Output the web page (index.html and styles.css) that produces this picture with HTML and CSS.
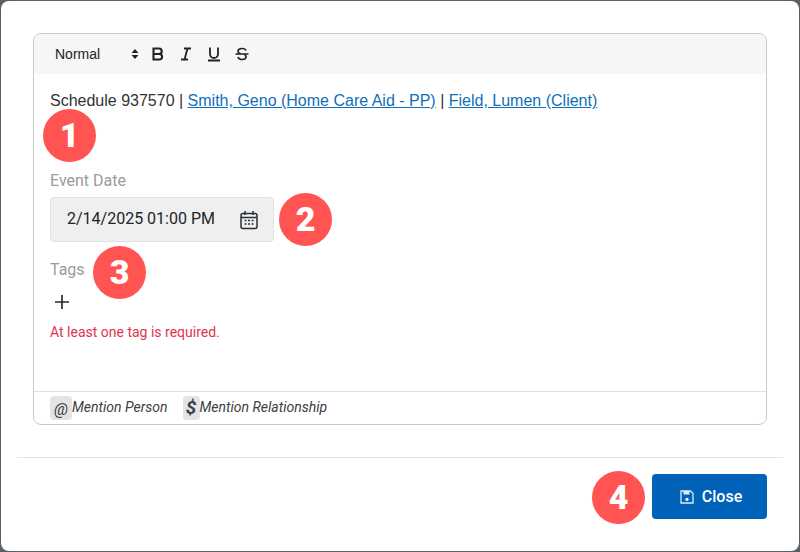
FILE: index.html
```html
<!DOCTYPE html>
<html lang="en">
<head>
<meta charset="utf-8">
<title>Event</title>
<link rel="stylesheet" href="styles.css">
</head>
<body>
<div class="modal">
  <div class="modal-body">
    <div class="editor">
      <div class="toolbar">
        <span class="picker">Normal
          <svg class="picker-arrows" width="8" height="10" viewBox="0 0 8 10"><path d="M4 0 7.500 4H.5zM4 10 .5 6h7z"/></svg>
        </span>
        <svg class="tool" width="18" height="18" viewBox="0 0 18 18"><path d="M4.500 3.500h5.500a2.700 2.700 0 0 1 0 5.500H4.500zM4.500 9h6.300a2.800 2.800 0 0 1 0 5.500H4.500z" fill="none" stroke="#222" stroke-width="2.100"/></svg>
        <svg class="tool" width="18" height="18" viewBox="0 0 18 18"><path d="M7 3.500h7M4 14.500h7M10.500 3.500l-3 11" fill="none" stroke="#222" stroke-width="1.800"/></svg>
        <svg class="tool" width="18" height="18" viewBox="0 0 18 18"><path d="M5 2.500v6.500a4 4 0 0 0 8 0V2.500M3 15.500h12" fill="none" stroke="#222" stroke-width="1.800"/></svg>
        <svg class="tool" width="18" height="18" viewBox="0 0 18 18"><path d="M13 5.500C12.500 4 11 3.500 9 3.500c-2.500 0-4 1-4 2.700 0 1.300 1 2 2.500 2.500M5 12c.5 1.700 2 2.500 4 2.500 2.500 0 4-1 4-2.700 0-1-.5-1.600-1.300-2.100M2.500 9h13" fill="none" stroke="#222" stroke-width="1.700"/></svg>
      </div>
      <div class="content">
        <p class="summary">Schedule 937570 | <a href="#">Smith, Geno (Home Care Aid - PP)</a> | <a href="#">Field, Lumen (Client)</a></p>
        <div class="field-date">
          <div class="label">Event Date</div>
          <div class="date-input">
            <span class="date-text">2/14/2025 01:00 PM</span>
            <svg width="20" height="20" viewBox="0 0 20 20" fill="none" stroke="#26303a" stroke-width="1.500"><rect x="2" y="3.500" width="16" height="15" rx="2"/><path d="M2 7.500h16M6 1v4M14 1v4"/><path d="M5.500 10.500h2M9 10.500h2M12.500 10.500h2M5.500 14h2M9 14h2M12.500 14h2" stroke-width="1.400"/></svg>
          </div>
        </div>
        <div class="label tags-label">Tags</div>
        <svg class="plus" width="14" height="14" viewBox="0 0 14 14"><path d="M7 0v14M0 7h14" stroke="#2b2b2b" stroke-width="1.700"/></svg>
        <div class="error">At least one tag is required.</div>
      </div>
      <div class="mentions">
        <span class="mention"><span class="key key-at">@</span><span class="mention-text">Mention Person</span></span>
        <span class="mention"><span class="key key-dollar">$</span><span class="mention-text">Mention Relationship</span></span>
      </div>
    </div>
  </div>
  <div class="modal-footer">
    <button class="close-btn" type="button">
      <svg width="14" height="14" viewBox="0 0 14 14" fill="none" stroke="#dfeaf6" stroke-width="1.300"><path d="M1 1h9.500L13 3.500V13H1z"/><path d="M3.500 1v3.500h6V1" fill="#dfeaf6" stroke="none"/><circle cx="7" cy="9.300" r="1.600" fill="#fff" stroke="none"/></svg>
      Close
    </button>
  </div>
  <span class="badge badge-1">1</span>
  <span class="badge badge-2">2</span>
  <span class="badge badge-3">3</span>
  <span class="badge badge-4">4</span>
</div>
</body>
</html>
```

FILE: styles.css
```css
* { box-sizing: border-box; }
html, body { margin: 0; height: 100%; }
body {
  background: #5a6063;
  padding: 1px;
  overflow: hidden;
  font-family: Roboto, sans-serif;
  color: #212529;
}
.modal {
  position: relative;
  height: 550px;
  background: #fff;
  border-radius: 8px;
  display: flex;
  flex-direction: column;
}
.modal-body { padding: 32px 32px 0; }
.editor {
  height: 392px;
  border: 1px solid #c8c8c8;
  border-radius: 8px;
  display: flex;
  flex-direction: column;
  overflow: hidden;
}
.toolbar {
  height: 40px;
  background: #f6f6f6;
  display: flex;
  align-items: center;
  padding-left: 21px;
  flex: none;
}
.picker {
  width: 94px;
  display: flex;
  justify-content: space-between;
  align-items: center;
  font: 14px "Liberation Sans", Arial, sans-serif;
  color: #222;
  padding-right: 10px;
}
.picker-arrows { fill: #222; }
.tool { margin-right: 10px; flex: none; }
.content { flex: 1; padding: 0 16px; }
.summary {
  margin: 18px 0 0;
  font: 16px/18px "Liberation Sans", Arial, sans-serif;
  color: #333;
}
.summary a { color: #0f6fb8; }
.field-date { margin-top: 61px; }
.label { font-size: 16px; line-height: 19px; color: #9b9b9b; }
.date-input {
  margin-top: 7px;
  width: 224px;
  height: 45px;
  background: #efefef;
  border: 1px solid #e2e2e2;
  border-radius: 4px;
  display: flex;
  align-items: center;
  justify-content: space-between;
  padding: 0 14px 0 16px;
  font-size: 16px;
  color: #212529;
}
.date-text { margin-bottom: 2px; }
.tags-label { margin-top: 18px; }
.plus { display: block; margin: 16px 0 0 5px; }
.error { margin-top: 15px; font-size: 14px; line-height: 17px; color: #e0344e; }
.mentions {
  height: 33px;
  border-top: 1px solid #e0e0e0;
  padding: 4px 16px 0;
  display: flex;
  flex: none;
  gap: 15px;
  font-size: 14px;
  font-style: italic;
  color: #3c4043;
}
.mention { display: flex; align-items: center; height: 24px; }
.mention-text { margin-bottom: 2px; }
.key {
  background: #e3e4e5;
  border-radius: 4px;
  height: 24px;
  display: flex;
  align-items: center;
  justify-content: center;
  font-size: 16px;
}
.key-at { width: 22px; padding-top: 2px; }
.key-dollar { width: 17px; font-size: 19px; font-weight: 700; padding-bottom: 2px; }
.modal-footer {
  margin: 32px 16px 0;
  border-top: 1px solid #e2e2e2;
  padding: 16px 16px 0 0;
  display: flex;
  justify-content: flex-end;
}
.close-btn {
  width: 115px;
  height: 45px;
  background: #0062b8;
  border: 0;
  border-radius: 4px;
  padding: 0 0 0 3px;
  color: #fff;
  font: 500 16px Roboto, sans-serif;
  display: flex;
  align-items: center;
  justify-content: center;
  gap: 8px;
}
.badge {
  position: absolute;
  width: 53px;
  height: 53px;
  border-radius: 50%;
  background: #ff5452;
  color: #fff;
  font: 900 34px/53px Roboto, sans-serif;
  text-align: center;
}
.badge-1 { left: 42px; top: 108px; }
.badge-2 { left: 278px; top: 192px; }
.badge-3 { left: 92px; top: 245px; }
.badge-4 { left: 591px; top: 470px; }
```
